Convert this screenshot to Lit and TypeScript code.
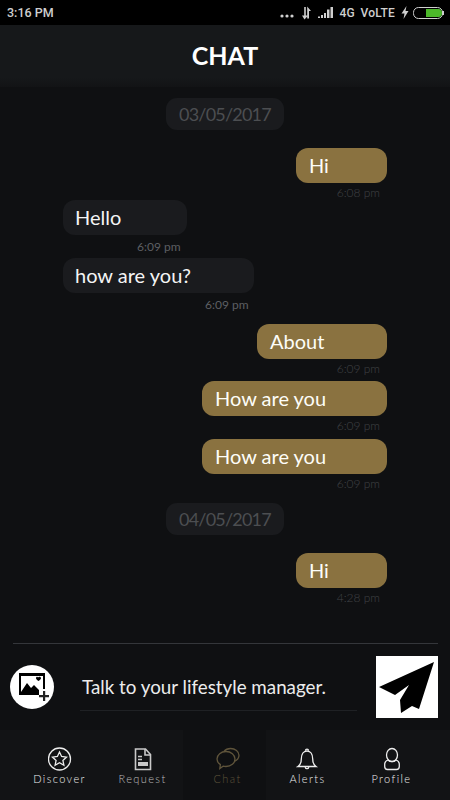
import { LitElement, html, css, svg } from 'lit';
import { customElement } from 'lit/decorators.js';

type Item =
  | { kind: 'date'; text: string; gap: number }
  | { kind: 'in' | 'out'; text: string; time: string; gap: number; width: number; timeInset: number };

const items: Item[] = [
  { kind: 'date', text: '03/05/2017', gap: 0 },
  { kind: 'out', text: 'Hi', time: '6:08 pm', gap: 18, width: 91, timeInset: 7 },
  { kind: 'in', text: 'Hello', time: '6:09 pm', gap: 0, width: 124, timeInset: 74 },
  { kind: 'in', text: 'how are you?', time: '6:09 pm', gap: -1, width: 191, timeInset: 142 },
  { kind: 'out', text: 'About', time: '6:09 pm', gap: 7, width: 130, timeInset: 7 },
  { kind: 'out', text: 'How are you', time: '6:09 pm', gap: 5, width: 185, timeInset: 7 },
  { kind: 'out', text: 'How are you', time: '6:09 pm', gap: 6, width: 185, timeInset: 7 },
  { kind: 'date', text: '04/05/2017', gap: 12 },
  { kind: 'out', text: 'Hi', time: '4:28 pm', gap: 18, width: 91, timeInset: 7 },
];

const tabIcons = {
  star: svg`<circle cx="11.500" cy="12" r="11" /><path d="M11.500 5l2.100 4.500 4.900.6-3.600 3.300 1 4.800-4.400-2.500-4.400 2.500 1-4.800-3.600-3.300 4.900-.6z" />`,
  doc: svg`<path d="M4.500 2h10l5 5.500V22.500h-15z" /><path d="M14 2v6h5.500" /><path d="M7 9.500h4M7 12.500h4" /><path class="fill" d="M7 15h10v4H7z" />`,
  chat: svg`<path d="M10 4.500c5 0 9 3.300 9 7.500s-4 7.500-9 7.500c-1 0-2-.1-2.900-.4l-3.300 2.400.6-3.900c-2-1.400-3.400-3.400-3.400-5.600 0-4.200 4-7.500 9-7.500z" /><path d="M8 4.300c1.400-1.700 3.800-2.800 6.500-2.800 4.700 0 8.500 3 8.500 6.800 0 2.700-1.900 5-4.700 6.100" />`,
  bell: svg`<path d="M2 19.500c2.300-1.600 3.300-3.700 3.300-7.500 0-4.700 2.300-8 5.700-8s5.700 3.300 5.700 8c0 3.800 1 5.900 3.300 7.500z" /><path d="M9.500 3.800c0-2.200 3-2.200 3 0M9 19.500c.3 2.800 3.700 2.800 4 0" />`,
  user: svg`<ellipse cx="12" cy="8" rx="5.500" ry="6.500" /><path d="M8 13c-2.200.8-3.300 2-3.300 4.300v2.200c0 2 1.200 3 2.800 3h9c1.600 0 2.800-1 2.800-3v-2.200c0-2.300-1.100-3.500-3.300-4.300-1 1.100-2.400 1.700-4 1.700s-3-.6-4-1.700z" />`,
};

const tabs = [
  { label: 'Discover', icon: tabIcons.star },
  { label: 'Request', icon: tabIcons.doc, tone: 'dim' },
  { label: 'Chat', icon: tabIcons.chat, tone: 'active' },
  { label: 'Alerts', icon: tabIcons.bell, tone: 'flush' },
  { label: 'Profile', icon: tabIcons.user },
];

@customElement('app-root')
export class AppRoot extends LitElement {
  static styles = css`
    :host {
      display: block;
      width: 450px;
      height: 800px;
      overflow: hidden;
      background: #0f1012;
      font-family: Lato, 'Noto Sans', sans-serif;
      color: #fff;
    }

    .page {
      display: flex;
      flex-direction: column;
      height: 800px;
    }

    /* status bar */
    .status {
      height: 25px;
      background: #000;
      display: flex;
      align-items: center;
      justify-content: space-between;
      padding: 0 6px 0 7px;
      font-family: Roboto, sans-serif;
      font-weight: 500;
      font-size: 12.5px;
      color: #cfcfcf;
    }

    .status-right {
      display: flex;
      align-items: center;
      gap: 4px;
      font-size: 12px;
    }

    .status-right svg {
      display: block;
    }

    .volte {
      letter-spacing: 0.2px;
      margin-left: 2px;
    }

    /* header */
    .header {
      height: 62px;
      flex: none;
      background: linear-gradient(#16181a 85%, #121315);
      display: flex;
      align-items: center;
      justify-content: center;
      font-size: 25px;
      font-weight: 700;
      padding-bottom: 3px;
      box-sizing: border-box;
    }

    /* messages */
    .messages {
      flex: 1;
      display: flex;
      flex-direction: column;
      padding: 11px 63px 0;
    }

    .date {
      align-self: center;
      height: 32px;
      line-height: 32px;
      width: 118px;
      text-align: center;
      border-radius: 11px;
      background: #1a1b1e;
      color: #4c4e51;
      font-size: 18px;
      letter-spacing: -0.8px;
    }

    .msg {
      display: flex;
      flex-direction: column;
    }

    .msg.out {
      align-items: flex-end;
    }

    .msg.in {
      align-items: flex-start;
    }

    .bubble {
      height: 35px;
      line-height: 34px;
      border-radius: 12px;
      font-size: 20px;
      padding-left: 13px;
      box-sizing: border-box;
      color: #fdfdf8;
    }

    .out .bubble {
      background: #8a7240;
    }

    .in .bubble {
      background: #1a1b1e;
      padding-left: 12px;
      color: #f4f4f4;
    }

    .time {
      font-size: 12px;
      height: 17px;
      line-height: 19px;
    }

    .out .time {
      color: #414346;
      font-weight: 300;
    }

    .in .time {
      color: #5d5f62;
      height: 24px;
      line-height: 23px;
    }

    /* composer */
    .composer {
      margin: 0 12px 0 13px;
      border-top: 1px solid #34363a;
      height: 87px;
      display: flex;
      align-items: flex-start;
      padding-top: 12px;
      box-sizing: border-box;
    }

    .attach {
      width: 44px;
      height: 44px;
      margin: 9px 0 0 -3px;
      flex: none;
      border-radius: 50%;
      background: #fff;
      display: flex;
      align-items: center;
      justify-content: center;
    }

    .field {
      width: 277px;
      height: 55px;
      margin-left: 26px;
      border-bottom: 1px solid #1f2124;
      line-height: 62px;
      font-size: 18.8px;
      color: #ececec;
      padding-left: 2px;
      box-sizing: border-box;
      white-space: nowrap;
    }

    .send {
      width: 62px;
      height: 62px;
      margin-left: 19px;
      background: #fff;
      flex: none;
    }

    .send svg {
      display: block;
    }

    /* tab bar */
    .tabs {
      height: 70px;
      flex: none;
      background: #121315;
      display: grid;
      grid-template-columns: repeat(5, 83px);
      padding: 0 17px;
    }

    .tab {
      display: flex;
      flex-direction: column;
      align-items: center;
      padding: 17px 0 0 2px;
      color: #ededed;
      font-size: 11px;
      font-weight: 300;
      line-height: 13px;
      letter-spacing: 1.4px;
    }

    .tab.dim {
      color: #bdbdbd;
    }

    .tab.flush {
      padding-left: 0;
    }

    .tab svg {
      display: block;
      fill: none;
      stroke: currentColor;
      stroke-width: 1.3;
    }

    .tab.dim svg {
      stroke-width: 1.6;
      color: #c9c9c9;
    }

    .tab svg .fill {
      fill: currentColor;
      stroke: none;
    }

    .tab span {
      margin-top: 1px;
    }

    .tab.active {
      background: #0f1012;
      color: #5f543b;
      padding-left: 6px;
    }
  `;

  private renderItem(item: Item) {
    if (item.kind === 'date') {
      return html`<div class="date" style="margin-top:${item.gap}px">${item.text}</div>`;
    }
    const inset = item.kind === 'out' ? 'padding-right' : 'padding-left';
    return html`
      <div class="msg ${item.kind}" style="margin-top:${item.gap}px">
        <div class="bubble" style="width:${item.width}px">${item.text}</div>
        <div class="time" style="${inset}:${item.timeInset}px">${item.time}</div>
      </div>
    `;
  }

  render() {
    return html`
      <div class="page">
        <div class="status">
          <span>3:16 PM</span>
          <div class="status-right">
            <svg width="14" height="12" viewBox="0 0 14 12" fill="#cfcfcf">
              <circle cx="2" cy="9" r="1.600" /><circle cx="7" cy="9" r="1.600" /><circle cx="12" cy="9" r="1.600" />
            </svg>
            <svg width="11" height="14" viewBox="0 0 11 14" fill="#cfcfcf" style="margin-left:3px">
              <path d="M3.200 1h1.600v8.500H7L3.500 13.500 1 9.500h2.200zM6.200 0.500L10 5H8v7.500H6.200z" />
            </svg>
            <svg width="15" height="11" viewBox="0 0 15 11" fill="#cfcfcf" style="margin-left:2px">
              <path d="M0 9.500h2V11H0zM3 8h2v3H3zM6 6h2v5H6zM9 2.500h2.500V11H9zM12.500 0H15v11h-2.500z" />
            </svg>
            <span style="margin-left:3px">4G</span>
            <span class="volte">VoLTE</span>
            <svg width="8" height="13" viewBox="0 0 8 13" fill="#cfcfcf" style="margin-left:2px">
              <path d="M5.500 0L0.500 7.500h3L2.500 13 7.500 5h-3z" />
            </svg>
            <svg width="31" height="12" viewBox="0 0 31 12">
              <rect x="0.500" y="0.500" width="29" height="11" rx="5" fill="none" stroke="#cfcfcf" />
              <path d="M13 2h12.500a3.500 4 0 0 1 0 8H13z" fill="#4cb82a" />
              <rect x="29" y="4" width="2" height="4" fill="#cfcfcf" />
            </svg>
          </div>
        </div>

        <div class="header">CHAT</div>

        <div class="messages">
          ${items.map((item) => this.renderItem(item))}
        </div>

        <div class="composer">
          <div class="attach">
            <svg width="36" height="36" viewBox="0 0 36 36">
              <rect x="5" y="4" width="26" height="22" fill="#000" />
              <rect x="7" y="7" width="22" height="16" fill="#fff" />
              <path d="M7 23l6-9 4 5 3-3 7 7z" fill="#000" />
              <path d="M24 8.500c1-1.200 3-.6 3 .8 0 1.300-1.600 2-2.500 2.800-1-.8-2.500-1.500-2.500-2.800 0-1.400 1.500-2 2-.8z" fill="#000" />
              <path d="M25 20h10v11H25z" fill="#fff" />
              <path d="M29 22h2.200v4H35v2.200h-3.800V32H29v-3.800h-4V26h4z" fill="#222" />
            </svg>
          </div>
          <div class="field">Talk to your lifestyle manager.</div>
          <div class="send">
            <svg width="62" height="62" viewBox="0 0 62 62">
              <path d="M58 6L3 31l16 8 14-10-9 15 1 13 11-7 7 3z" fill="#000" />
            </svg>
          </div>
        </div>

        <div class="tabs">
          ${tabs.map(
            (t) => html`
              <div class="tab ${t.tone ?? ''}">
                <svg width="24" height="24" viewBox="0 0 24 24">${t.icon}</svg>
                <span>${t.label}</span>
              </div>
            `
          )}
        </div>
      </div>
    `;
  }
}
